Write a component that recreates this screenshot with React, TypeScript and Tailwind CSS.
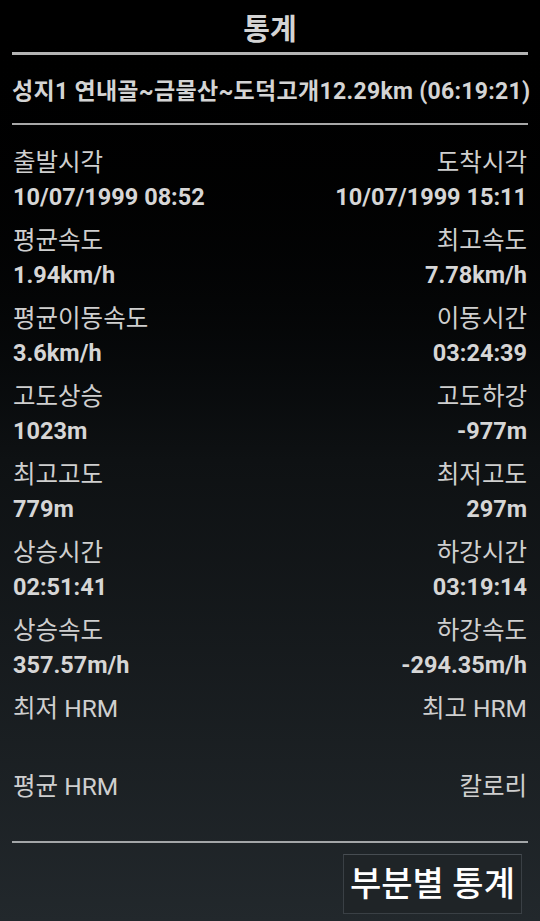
const font = { fontFamily: 'Roboto, "Noto Sans CJK KR", sans-serif' };

type Stat = { left: string; leftValue?: string; right: string; rightValue?: string };

const stats: Stat[] = [
  { left: '출발시각', leftValue: '10/07/1999 08:52', right: '도착시각', rightValue: '10/07/1999 15:11' },
  { left: '평균속도', leftValue: '1.94km/h', right: '최고속도', rightValue: '7.78km/h' },
  { left: '평균이동속도', leftValue: '3.6km/h', right: '이동시간', rightValue: '03:24:39' },
  { left: '고도상승', leftValue: '1023m', right: '고도하강', rightValue: '-977m' },
  { left: '최고고도', leftValue: '779m', right: '최저고도', rightValue: '297m' },
  { left: '상승시간', leftValue: '02:51:41', right: '하강시간', rightValue: '03:19:14' },
  { left: '상승속도', leftValue: '357.57m/h', right: '하강속도', rightValue: '-294.35m/h' },
  { left: '최저 HRM', right: '최고 HRM' },
  { left: '평균 HRM', right: '칼로리' },
];

function StatRow({ stat }: { stat: Stat }) {
  return (
    <div className="flex justify-between">
      <div className="flex flex-col">
        <span className="h-[36px] leading-[38px] text-[24.5px] text-[#cfcfcf]">{stat.left}</span>
        <span className="h-[34px] leading-[34px] text-[23.5px] font-bold text-[#d6d6d6]">{stat.leftValue}</span>
      </div>
      <div className="flex flex-col items-end">
        <span className="h-[36px] leading-[38px] text-[24.5px] text-[#cfcfcf]">{stat.right}</span>
        <span className="h-[34px] leading-[34px] text-[23.5px] font-bold text-[#d6d6d6]">{stat.rightValue}</span>
      </div>
    </div>
  );
}

export default function App() {
  return (
    <div
      style={font}
      className="w-[540px] h-[921px] overflow-hidden bg-gradient-to-b from-black via-[#0e1113] to-[#22282c] px-[12px]"
    >
      {/* Title */}
      <div className="pt-[8px] h-[52px] leading-[44px] text-center text-[29px] font-bold text-[#d4d4d4]">통계</div>
      <div className="h-[3px] bg-[#b4b4b4]" />

      {/* Track */}
      <div className="pt-[4px] h-[68px] leading-[66px] text-[23px] font-bold text-[#d4d4d4] whitespace-nowrap tracking-[0.3px]">
        성지1 연내골~금물산~도덕고개12.29km (06:19:21)
      </div>
      <div className="h-[2px] bg-[#a8a8a8]" />

      {/* Stats */}
      <div className="pt-[19px] flex flex-col gap-[8px] px-[1px]">
        {stats.map((s) => (
          <StatRow key={s.left} stat={s} />
        ))}
      </div>
      <div className="mt-[3px] h-[2px] bg-[#a3a6a8]" />

      {/* Footer */}
      <div className="flex justify-end pt-[11px] pr-[6px]">
        <button className="w-[179px] h-[60px] border border-[#3a4045] border-t-[#474d52] bg-[#1f2427] text-[34px] font-medium text-white leading-none whitespace-nowrap">
          부분별 통계
        </button>
      </div>
    </div>
  );
}
